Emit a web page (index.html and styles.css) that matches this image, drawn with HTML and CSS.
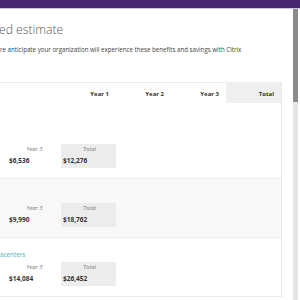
FILE: index.html
```html
<!DOCTYPE html>
<html lang="en">
<head>
  <meta charset="UTF-8" />
  <title>Estimate</title>
  <link rel="stylesheet" href="styles.css">
</head>
<body>
  <div class="topbar"></div>

  <div class="frame">
    <main class="main">
      <h1 class="title">ed estimate</h1>
      <p class="lead">re anticipate your organization will experience these benefits and savings with Citrix</p>

      <div class="table">
        <!-- column headers -->
        <div class="head">
          <div class="hcell">Year 1</div>
          <div class="hcell">Year 2</div>
          <div class="hcell">Year 3</div>
          <div class="hcell total">Total</div>
        </div>

        <!-- benefit rows -->
        <div class="row first">
          <div class="row-label"></div>
          <div class="figures">
            <div class="fig">
              <span class="fig-label">Year 3</span>
              <span class="fig-value">$6,536</span>
            </div>
            <div class="fig total">
              <span class="fig-label">Total</span>
              <span class="fig-value">$12,276</span>
            </div>
          </div>
        </div>

        <div class="row alt">
          <div class="row-label"></div>
          <div class="figures">
            <div class="fig">
              <span class="fig-label">Year 3</span>
              <span class="fig-value">$9,990</span>
            </div>
            <div class="fig total">
              <span class="fig-label">Total</span>
              <span class="fig-value">$18,762</span>
            </div>
          </div>
        </div>

        <div class="row">
          <div class="row-label link">acenters</div>
          <div class="figures">
            <div class="fig">
              <span class="fig-label">Year 3</span>
              <span class="fig-value">$14,084</span>
            </div>
            <div class="fig total">
              <span class="fig-label">Total</span>
              <span class="fig-value">$26,452</span>
            </div>
          </div>
        </div>
      </div>
    </main>

    <div class="scrollbar">
      <div class="thumb"></div>
    </div>
  </div>
</body>
</html>
```

FILE: styles.css
```css
body {
  margin: 0;
  font-family: 'Open Sans', sans-serif;
  color: #333;
  background: #fff;
  width: 300px;
  height: 300px;
  overflow: hidden;
}

.topbar {
  height: 8px;
  background: #4a2572;
  border-bottom: 1px solid #cdc2da;
}

.frame {
  display: flex;
  height: 291px;
}

.main {
  width: 293px;
}

.title {
  margin: 12px 0 0 -1px;
  font-size: 12.2px;
  font-weight: 300;
  line-height: 18px;
  color: #555;
}

.lead {
  margin: 6px 0 0;
  font-size: 6.2px;
  line-height: 10px;
  color: #444;
}

/* Table */
.table {
  margin-top: 27px;
  width: 281px;
  border-top: 1px solid #eee;
  border-right: 1px solid #e8e8e8;
}

.head {
  display: flex;
  justify-content: flex-end;
  height: 20px;
}

.hcell {
  width: 55px;
  padding-right: 3px;
  box-sizing: border-box;
  text-align: right;
  font-size: 6px;
  font-weight: 700;
  line-height: 22px;
  color: #333;
}

.hcell.total {
  margin-left: 4px;
  padding-right: 7px;
  background: #efefef;
}

.row {
  padding: 12px 0 10px;
  border-bottom: 1px solid #eee;
}

.row.first {
  padding-top: 29px;
}

.row.alt {
  background: #f8f8f8;
}

.row-label {
  height: 10px;
  margin-bottom: 2px;
  font-size: 6.3px;
  line-height: 10px;
  color: #55b0c0;
}

.figures {
  display: flex;
  gap: 1px;
  padding-left: 5px;
}

.fig {
  width: 55px;
  height: 24px;
  padding: 1px 0 0 4px;
  box-sizing: border-box;
  display: flex;
  flex-direction: column;
}

.fig.total {
  padding-left: 2px;
  background: #ececec;
}

.fig-label {
  height: 10px;
  text-align: center;
  font-size: 5.8px;
  font-style: italic;
  line-height: 9px;
  color: #777;
}

.fig-value {
  font-size: 6.5px;
  font-weight: 700;
  line-height: 11px;
  color: #333;
}

/* Fake scrollbar */
.scrollbar {
  width: 5px;
  background: #e4e4e4;
}

.thumb {
  height: 93px;
  background: #8c8c8c;
}
```
